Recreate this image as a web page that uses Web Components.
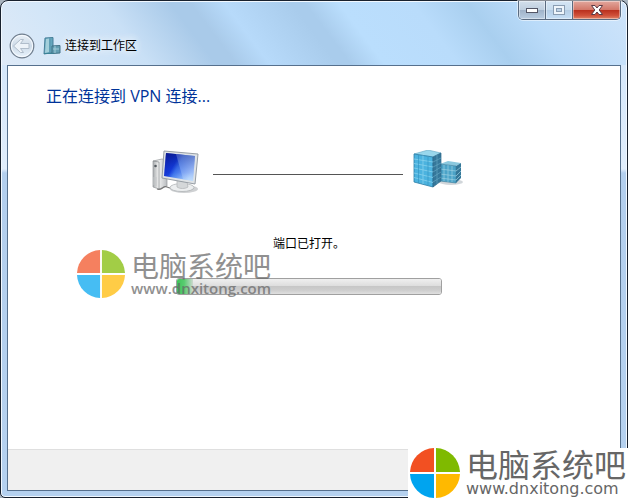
<!DOCTYPE html>
<html lang="zh-CN">
<head>
<meta charset="utf-8">
<title>连接到工作区</title>
<style>
body {
	margin: 0;
	background: #a9b4bf;
	font-family: "Open Sans", "Noto Sans CJK SC", sans-serif;
	font-size: 12px;
	color: #000;
}
</style>
</head>
<body>
<connect-wizard></connect-wizard>

<script>
class CaptionButtons extends HTMLElement {
	constructor() {
		super();
		this.attachShadow({ mode: 'open' }).innerHTML = `
<style>
:host { display: flex; justify-content: flex-end; }
.group {
	display: flex;
	border: 1px solid #5a6b80;
	border-top: 0;
	border-radius: 0 0 5px 5px;
	overflow: hidden;
	box-shadow: 0 0 0 1px rgba(255, 255, 255, .5);
}
button {
	display: flex;
	align-items: center;
	justify-content: center;
	width: 27px;
	height: 18px;
	padding: 0;
	border: 0;
	border-right: 1px solid #5a6b80;
	box-shadow: inset 0 0 0 1px rgba(255, 255, 255, .4);
	background: linear-gradient(#d3dfeb, #bfcfdf 48%, #9fb2c8 50%, #b9cde1);
}
button:disabled { background: linear-gradient(#d5e5f4, #c8dced 48%, #b4cde5 50%, #c6dff6); }
button.close {
	width: 47px;
	border-right: 0;
	background: linear-gradient(#e2a89e, #d3786a 48%, #b82e1c 50%, #cf5039 80%, #e08467);
}
</style>
<div class="group">
	<button type="button" aria-label="最小化"><svg width="14" height="8"><rect x="1.500" y="2.500" width="11" height="4" fill="#fff" stroke="#535666"/></svg></button>
	<button type="button" aria-label="最大化" disabled><svg width="12" height="10"><rect x=".5" y=".5" width="11" height="9" fill="#eef5fb" stroke="#8a9db2"/><rect x="3.500" y="3.500" width="5" height="3" fill="#bdd2e6" stroke="#8a9db2"/></svg></button>
	<button type="button" class="close" aria-label="关闭"><svg width="14" height="12"><path d="M1.500 1.500h3.500l2 2.500 2-2.500h3.500L9.200 6l3.300 4.500H9L7 8l-2 2.500H1.500L4.800 6z" fill="#fff" stroke="#5a3a45"/></svg></button>
</div>`;
	}
}

class WizardWindow extends HTMLElement {
	constructor() {
		super();
		this.attachShadow({ mode: 'open' }).innerHTML = `
<style>
:host {
	display: flex;
	flex-direction: column;
	box-sizing: border-box;
	min-height: 100vh;
	border: 1px solid #18212e;
	border-radius: 8px 8px 5px 5px;
	padding: 0 6px 6px;
	box-shadow: inset 0 0 0 1px #f1f8ff;
	background:
		linear-gradient(53deg, #dfeaf7 0, #d3e6f8 12%, #c9e0f6 22%, #a9cae9 32%, #a9cae9 35%, #b7dafa 40%, #a9ccec 50%, #a9ccec 52%, #badefd 57%, #b9dcfb 68%, #a9cfef 76%, #badbf9 84%, #cfe4fa 100%) 0 0 / 100% 64px no-repeat,
		linear-gradient(#d5e7fa 64px, #e0edfb 168px, #b3cfee 172px, #b5d1ef);
}
.nav {
	display: flex;
	align-items: center;
	gap: 8px;
	height: 34px;
	padding: 9px 0 2px 2px;
}
.back {
	width: 26px;
	height: 26px;
	padding: 0;
	border: 0;
	background: none;
}
svg { display: block; }
h1 {
	margin: 0;
	padding: 0 4px;
	margin-left: -8px;
	font-size: 12px;
	line-height: 16px;
	font-weight: normal;
	text-shadow: 0 0 8px #fff, 0 0 8px #fff;
}
.client {
	flex: 1;
	display: flex;
	flex-direction: column;
	border: 1px solid #56708d;
	background: #fff;
}
main { flex: 1; }
footer {
	height: 40px;
	border-top: 1px solid #dfdfdf;
	background: #f0f0f0;
}
</style>
<caption-buttons></caption-buttons>
<div class="nav">
	<button type="button" class="back" aria-label="返回" disabled>
		<svg width="26" height="26">
			<defs><linearGradient id="g" x2="0" y2="1"><stop stop-color="#e9f0f7"/><stop offset=".5" stop-color="#cedbe8"/><stop offset="1" stop-color="#e9f4fe"/></linearGradient></defs>
			<circle cx="13" cy="13" r="11.800" fill="url(#g)" stroke="#707e8e" stroke-width="1.200"/>
			<circle cx="13" cy="13" r="10.600" fill="none" stroke="#f8fbff"/>
			<path d="M4.500 13l7-6.500h3L11.500 10.500H20v5h-8.500l3 4h-3z" fill="#edf3f9" stroke="#b0bdcb" stroke-linejoin="round"/>
		</svg>
	</button>
	<svg width="18" height="18">
		<path d="M2 1l8-.5v15L1 17z" fill="#65a6bd" stroke="#477f99"/>
		<path d="M3 2l3-.5V15l-4 1z" fill="#a3cfdb"/>
		<path d="M7 2v13" stroke="#5b96ad"/>
		<path d="M9 9l8-.5V16l-8 .5z" fill="#639eb3" stroke="#3e7085"/>
		<path d="M10 12h6M12 9v7" stroke="#a4ccd8"/>
		<path d="M1 16.500h9" stroke="#3a8296"/>
	</svg>
	<h1><slot name="title"></slot></h1>
</div>
<div class="client">
	<main><slot></slot></main>
	<footer></footer>
</div>`;
	}
}

// computer --------- server
class LinkDiagram extends HTMLElement {
	constructor() {
		super();
		this.attachShadow({ mode: 'open' }).innerHTML = `
<style>
:host { display: flex; align-items: center; gap: 10px; }
.line { flex: 1; height: 1px; background: #555; }
svg { display: block; }
</style>
<svg width="52" height="48" viewBox="0 0 52 48" role="img" aria-label="计算机">
	<defs>
		<linearGradient id="scr" x1="0" y1="0" x2="1" y2=".5"><stop stop-color="#1822a8"/><stop offset=".42" stop-color="#1b3fd8"/><stop offset=".55" stop-color="#4f86ee"/><stop offset="1" stop-color="#b9d8fb"/></linearGradient>
		<linearGradient id="blu" x2="0" y2="1"><stop stop-color="#00107c" stop-opacity=".6"/><stop offset=".7" stop-color="#0030e0" stop-opacity=".25"/><stop offset="1" stop-color="#2870ff" stop-opacity="0"/></linearGradient>
		<linearGradient id="tow"><stop stop-color="#a9adaf"/><stop offset=".4" stop-color="#f1f1f1"/><stop offset="1" stop-color="#b9bcbf"/></linearGradient>
	</defs>
	<g transform="translate(0 -1)">
	<path d="M2 12l9-2 5 1v26l-8 3-6-2z" fill="url(#tow)" stroke="#96999c" stroke-width=".7"/>
	<path d="M2 12l6 1v27" fill="none" stroke="#85898c" stroke-width=".7"/>
	<circle cx="4.500" cy="17" r="1.300" fill="#565b60"/>
	<path d="M3 28v8M5 28v9" stroke="#c3c6c8"/>
	<path d="M6 40c5 2 6-4 10-2s7 1 8-2" fill="none" stroke="#777" stroke-width="1.200"/>
	<ellipse cx="33" cy="40" rx="14" ry="4" fill="#cfd1d3"/>
	<ellipse cx="31" cy="38.500" rx="12" ry="4" fill="#eceeef" stroke="#a9adb0" stroke-width=".7"/>
	<path d="M26 31l10 2 1 5c-3 2-8 2-11 0z" fill="#d4d7d9" stroke="#b0b3b6" stroke-width=".7"/>
	<path d="M13 2l34 3-3 30-33-6z" fill="#dfe3e6" stroke="#989fa6"/>
	<path d="M15 4l29 3-2 25-29-5z" fill="url(#scr)"/>
	<path d="M15 4l29 3-2 25-29-5z" fill="url(#blu)"/>
	<path d="M25 5l19 2-2 25-10-2z" fill="#d4e9ff" opacity=".25"/>
	</g>
</svg>
<div class="line"></div>
<svg width="50" height="48" viewBox="0 0 50 48" role="img" aria-label="服务器">
	<g transform="translate(0 -1)">
	<ellipse cx="38" cy="33" rx="12" ry="3" fill="#bdc5ca" opacity=".7"/>
	<path d="M27 15l8-3 13 2-5 3z" fill="#8bc8de"/>
	<path d="M27 15l16 2v17l-16-2z" fill="#4ba3c8" stroke="#397c9a" stroke-width=".6"/>
	<path d="M43 17l5-3v15l-5 5z" fill="#347798"/>
	<path d="M31 16v16M35 16v17M39 17v16M27 20l16 2 5-4M27 25l16 2 5-5M27 29l16 2 5-5" fill="none" stroke="#9bd0e2" stroke-width=".7"/>
	<path d="M1 5L15 1l13 3-8 4z" fill="#99d7ec" stroke="#65a8c3" stroke-width=".6"/>
	<path d="M1 5l19 3v30L1 33z" fill="#4cb3df" stroke="#2c7ea6" stroke-width=".8"/>
	<path d="M20 8l8-4v28l-8 6z" fill="#35779a" stroke="#2d6889" stroke-width=".7"/>
	<path d="M10 6.500V35M1 10l19 3M1 14.500l19 3.500M1 19l19 4M1 24l19 4.500M1 28.500l19 5" stroke="#86d0ec" stroke-width=".8" fill="none"/>
	<path d="M5.500 6v28M15 8v28" stroke="#2f91bd" stroke-width=".6"/>
	<path d="M20 13l8-4M20 18l8-4M20 23l8-5M20 28l8-5M20 33l8-5M24 6v29" stroke="#69adc7" stroke-width=".6"/>
	</g>
</svg>`;
	}
}

class ConnectProgress extends HTMLElement {
	constructor() {
		super();
		this.attachShadow({ mode: 'open' }).innerHTML = `
<style>
:host { display: flex; flex-direction: column; align-items: center; gap: 24px; }
label { line-height: 20px; }
progress {
	display: block;
	-webkit-appearance: none;
	appearance: none;
	box-sizing: border-box;
	width: 100%;
	height: 17px;
	border: 1px solid #a0a0a0;
	border-radius: 3px;
	overflow: hidden;
}
progress::-webkit-progress-bar {
	background: linear-gradient(#efefef, #dedede 45%, #c7c7c7 50%, #cecece 75%, #dfdfdf);
}
progress::-webkit-progress-value {
	background: linear-gradient(90deg, #3fc45a, #58cc70 45%, #cdd8cf);
}
</style>
<label for="bar"><slot></slot></label>
<progress id="bar" max="100"></progress>`;
		this.shadowRoot.querySelector('progress').value = this.getAttribute('value');
	}
}

class SiteMark extends HTMLElement {
	constructor() {
		super();
		this.attachShadow({ mode: 'open' }).innerHTML = `
<style>
:host {
	display: flex;
	align-items: center;
	gap: 6px;
	color: #666;
	white-space: nowrap;
}
svg { display: block; width: var(--mark-logo, 50px); height: var(--mark-logo, 50px); }
::slotted(span) { display: block; }
.name { font-size: var(--mark-name, 32px); line-height: var(--mark-name, 32px); }
.url { font: var(--mark-url, 16px/16px "DejaVu Sans", sans-serif); }
</style>
<svg viewBox="0 0 50 50">
	<path d="M24 24V0A25 25 0 0 0 0 24z" fill="#f25022"/>
	<path d="M26 24V0A25 25 0 0 1 50 24z" fill="#7fba00"/>
	<path d="M24 26V50A25 25 0 0 1 0 26z" fill="#00a4ef"/>
	<path d="M26 26V50A25 25 0 0 0 50 26z" fill="#ffb900"/>
</svg>
<div>
	<div class="name"><slot name="name"></slot></div>
	<div class="url"><slot name="url"></slot></div>
</div>`;
	}
}

class ConnectWizard extends HTMLElement {
	constructor() {
		super();
		this.attachShadow({ mode: 'open' }).innerHTML = `
<style>
:host { display: block; position: relative; }
h2 {
	margin: 0;
	padding: 20px 38px 0;
	font-size: 16px;
	line-height: 20px;
	font-weight: normal;
	color: #003399;
}
link-diagram { margin: 44px 157px 0 143px; }
connect-progress { margin: 36px 178px 0 168px; }
.over-bar {
	position: absolute;
	left: 77px;
	top: 250px;
	opacity: .72;
	--mark-logo: 48px;
	--mark-name: 28px;
	--mark-url: 600 15px/16px "Open Sans", sans-serif;
}
.corner {
	position: absolute;
	right: 0;
	bottom: 0;
	padding: 0 2px;
	background: #fff;
}
</style>
<wizard-window>
	<span slot="title">连接到工作区</span>
	<h2>正在连接到 VPN 连接...</h2>
	<link-diagram></link-diagram>
	<connect-progress value="6">端口已打开。</connect-progress>
</wizard-window>
<site-mark class="over-bar"><span slot="name">电脑系统吧</span><span slot="url">www.dnxitong.com</span></site-mark>
<site-mark class="corner"><span slot="name">电脑系统吧</span><span slot="url">www.dnxitong.com</span></site-mark>`;
	}
}

window.customElements.define('caption-buttons', CaptionButtons);
window.customElements.define('wizard-window', WizardWindow);
window.customElements.define('link-diagram', LinkDiagram);
window.customElements.define('connect-progress', ConnectProgress);
window.customElements.define('site-mark', SiteMark);
window.customElements.define('connect-wizard', ConnectWizard);
</script>
</body>
</html>
